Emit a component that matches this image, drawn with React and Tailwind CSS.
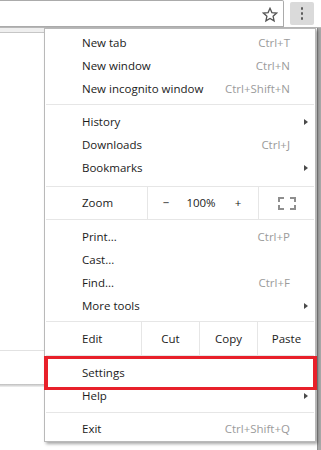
import React from "react";

function Arrow() {
  return (
    <span className="block h-0 w-0 border-y-[3.5px] border-l-[4px] border-y-transparent border-l-[#4a4a4a]" />
  );
}

function Item({ label, shortcut, arrow }) {
  return (
    <div className="flex h-[23px] items-center pl-[37px]">
      <span className="flex-1 text-[#1b1b1b]">{label}</span>
      {shortcut && <span className="text-[#9b9b9b]">{shortcut}</span>}
      <span className="flex w-[25px] items-center pl-[14px]">{arrow && <Arrow />}</span>
    </div>
  );
}

function Sep({ top, bottom }) {
  return <div className={`mx-[1px] h-px bg-[#e6e6e6] ${top} ${bottom}`} />;
}

export default function App() {
  return (
    <div className="relative h-[450px] w-[321px] overflow-hidden bg-white font-['Open_Sans','Noto_Sans',sans-serif] text-[11.5px] leading-none">
      {/* toolbar */}
      <div className="flex h-[27px]">
        <div className="relative h-[27px] w-[284px] rounded-tr-[2px] border-y border-r border-[#ababab] bg-white">
          <svg className="absolute left-[262px] top-[6px]" width="16" height="16" viewBox="0 0 16 16">
            <path
              d="M8 1.3 L9.9 5.6 L14.6 6.1 L11.1 9.2 L12.1 13.9 L8 11.5 L3.9 13.9 L4.9 9.2 L1.4 6.1 L6.1 5.6 Z"
              fill="none"
              stroke="#555"
              strokeWidth="1.3"
              strokeLinejoin="miter"
            />
          </svg>
        </div>
        <div className="ml-[6px] mt-[2px] flex h-[23px] w-[24px] flex-col items-center justify-center gap-[2.5px] rounded-[2px] bg-[#dadada]">
          <span className="h-[2.5px] w-[2.5px] rounded-full bg-[#5c5c5c]" />
          <span className="h-[2.5px] w-[2.5px] rounded-full bg-[#5c5c5c]" />
          <span className="h-[2.5px] w-[2.5px] rounded-full bg-[#5c5c5c]" />
        </div>
      </div>
      <div className="h-px bg-[#b7b7b7]" />

      {/* page behind */}
      <div className="flex h-[422px]">
        <div className="w-[45px]">
          <div className="h-[5px] border-b border-[#c6c6c6] bg-[#efefef]" />
          <div className="h-[317px] border-r border-[#b4b4b4] bg-white" />
          <div className="h-px bg-[#e2e2e2]" />
          <div className="h-[33px] border-r border-[#b4b4b4] bg-white" />
          <div className="h-[3px] bg-gradient-to-b from-[#bdbdbd] to-[#f2f2f2]" />
        </div>
        <div className="flex-1" />
        <div className="w-[4px] border-l border-[#8d8d8d] bg-[#a9a9a9]" />
      </div>

      {/* menu */}
      <div className="absolute left-[44px] top-[28px] w-[272px] border border-[#b9b9b9] bg-white pb-[1px] pt-[2px] shadow-[2px_2px_3px_rgba(0,0,0,0.35)]">
        <Item label="New tab" shortcut="Ctrl+T" />
        <Item label="New window" shortcut="Ctrl+N" />
        <Item label="New incognito window" shortcut="Ctrl+Shift+N" />
        <Sep top="mt-[4px]" bottom="mb-[5px]" />
        <Item label="History" arrow />
        <Item label="Downloads" shortcut="Ctrl+J" />
        <Item label="Bookmarks" arrow />
        <Sep top="mt-[7px]" bottom="mb-0" />
        <div className="flex h-[32px] items-center">
          <span className="w-[102px] pl-[37px] text-[#1b1b1b]">Zoom</span>
          <div className="flex h-full w-[112px] items-center border-x border-[#e6e6e6] text-[#1b1b1b]">
            <span className="w-[36px] text-center">−</span>
            <span className="flex-1 text-center">100%</span>
            <span className="w-[40px] text-center">+</span>
          </div>
          <div className="flex flex-1 items-center justify-center">
            <svg width="18" height="13" viewBox="0 0 18 13">
              <path
                d="M1 5 V1 H6 M12 1 H17 V5 M1 8 V12 H6 M12 12 H17 V8"
                fill="none"
                stroke="#8e8e8e"
                strokeWidth="2"
              />
            </svg>
          </div>
        </div>
        <Sep top="mt-0" bottom="mb-[5px]" />
        <Item label="Print..." shortcut="Ctrl+P" />
        <Item label="Cast..." />
        <Item label="Find..." shortcut="Ctrl+F" />
        <Item label="More tools" arrow />
        <Sep top="mt-[4px]" bottom="mb-0" />
        <div className="flex h-[33px] items-center text-[#1b1b1b]">
          <span className="w-[96px] pl-[37px]">Edit</span>
          <span className="flex h-full w-[58px] items-center justify-center border-l border-[#e6e6e6]">Cut</span>
          <span className="flex h-full w-[58px] items-center justify-center border-l border-[#e6e6e6]">Copy</span>
          <span className="flex h-full flex-1 items-center justify-center border-l border-[#e6e6e6]">Paste</span>
        </div>
        <Sep top="mt-0" bottom="mb-[5px]" />
        <Item label="Settings" />
        <Item label="Help" arrow />
        <Sep top="mt-[5px]" bottom="mb-[4px]" />
        <Item label="Exit" shortcut="Ctrl+Shift+Q" />
      </div>

      {/* highlight */}
      <div className="absolute left-[44px] top-[356px] h-[34px] w-[273px] border-x-[4px] border-y-[3px] border-[#e8202a]" />
    </div>
  );
}
